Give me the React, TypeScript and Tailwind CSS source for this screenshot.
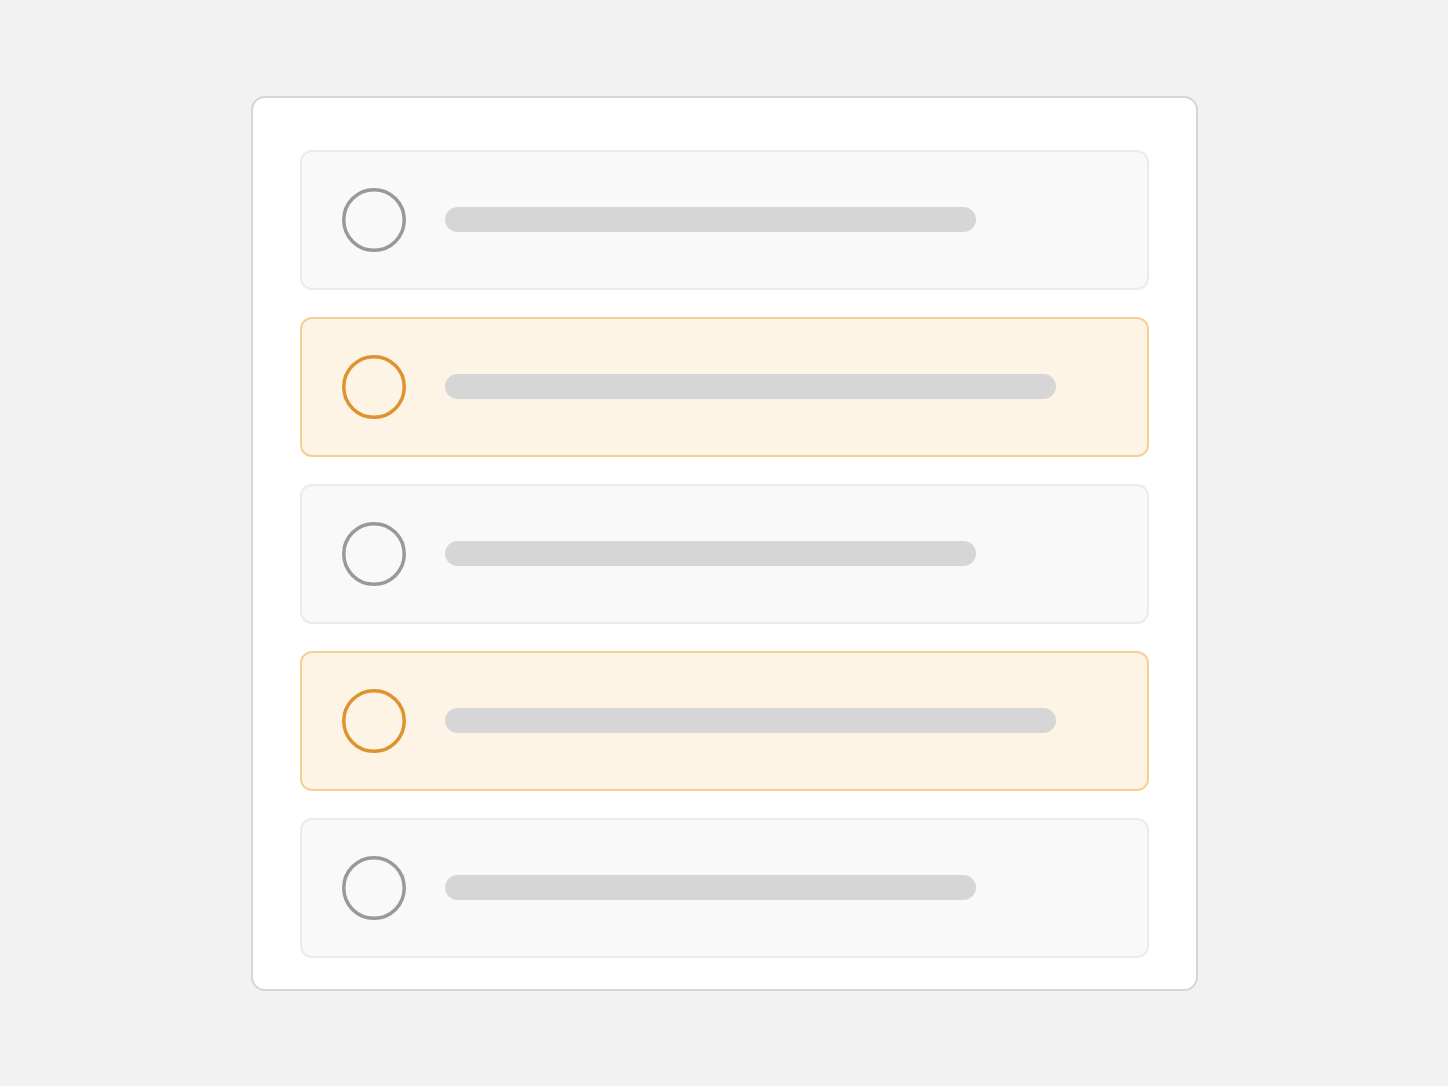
import React from 'react';

type Row = {
  active: boolean;
  barWidth: string;
};

const rows: Row[] = [
  { active: false, barWidth: 'w-[531px]' },
  { active: true, barWidth: 'w-[611px]' },
  { active: false, barWidth: 'w-[531px]' },
  { active: true, barWidth: 'w-[611px]' },
  { active: false, barWidth: 'w-[531px]' },
];

const Ring: React.FC<{ active: boolean }> = ({ active }) => (
  <svg width="64" height="64" viewBox="0 0 64 64" className="shrink-0">
    <circle
      cx="32"
      cy="32"
      r="30.25"
      fill="none"
      stroke={active ? '#dc9330' : '#999999'}
      strokeWidth="3.5"
    />
  </svg>
);

const OptionRow: React.FC<{ row: Row }> = ({ row }) => {
  return (
    <div
      className={`flex items-center h-[140px] rounded-[12px] border-2 pl-[40px] ${
        row.active ? 'bg-[#fef4e6] border-[#f6cf94]' : 'bg-[#f9f9f9] border-[#ebebeb]'
      }`}
    >
      <Ring active={row.active} />
      <div className={`ml-[39px] h-[25px] rounded-full bg-[#d6d6d6] ${row.barWidth}`} />
    </div>
  );
};

const App: React.FC = () => {
  return (
    <div className="min-h-[1086px] w-full bg-[#f2f2f2] flex items-center justify-center">
      <div className="w-[947px] h-[895px] bg-white border-2 border-[#d6d6d6] rounded-[14px] pt-[52px] px-[47px] flex flex-col gap-[27px]">
        {rows.map((row, i) => (
          <OptionRow key={i} row={row} />
        ))}
      </div>
    </div>
  );
};

export default App;
